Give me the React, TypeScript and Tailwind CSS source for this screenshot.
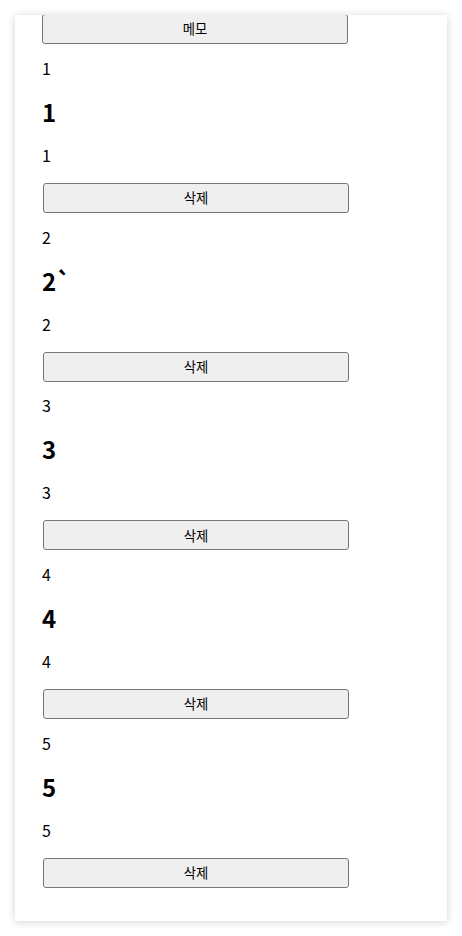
import React, { useState } from "react";

interface Memo {
  id: number;
  title: string;
  body: string;
}

const initialMemos: Memo[] = [
  { id: 1, title: "1", body: "1" },
  { id: 2, title: "2`", body: "2" },
  { id: 3, title: "3", body: "3" },
  { id: 4, title: "4", body: "4" },
  { id: 5, title: "5", body: "5" },
];

const btn =
  "w-[306px] h-[30px] bg-[#efefef] border border-[#767676] rounded-[3px] text-[13.33px] text-black leading-none";

const App = () => {
  const [memos, setMemos] = useState<Memo[]>(initialMemos);

  return (
    <div
      className="min-h-screen bg-white pt-[15px] pb-[15px]"
      style={{ fontFamily: '"Noto Sans CJK KR", "Noto Sans", sans-serif' }}
    >
      {/* card */}
      <div className="ml-[15px] w-[432px] h-[906px] bg-white overflow-hidden shadow-[0_1px_8px_rgba(0,0,0,0.18)] pl-[27px]">
        <button className={`${btn} -mt-px block`}>메모</button>

        {memos.map((m) => (
          <div key={m.id} className="flex flex-col pt-[11.75px]">
            <p className="text-[16px] leading-[24px] text-black">{m.id}</p>
            <h2 className="mt-[16px] text-[24px] leading-[32px] font-bold text-black">
              {m.title}
            </h2>
            <p className="mt-[15px] text-[16px] leading-[24px] text-black">{m.body}</p>
            <button
              className={`${btn} mt-[16px] ml-px`}
              onClick={() => setMemos(memos.filter((x) => x.id !== m.id))}
            >
              삭제
            </button>
          </div>
        ))}
      </div>
    </div>
  );
};

export default App;
